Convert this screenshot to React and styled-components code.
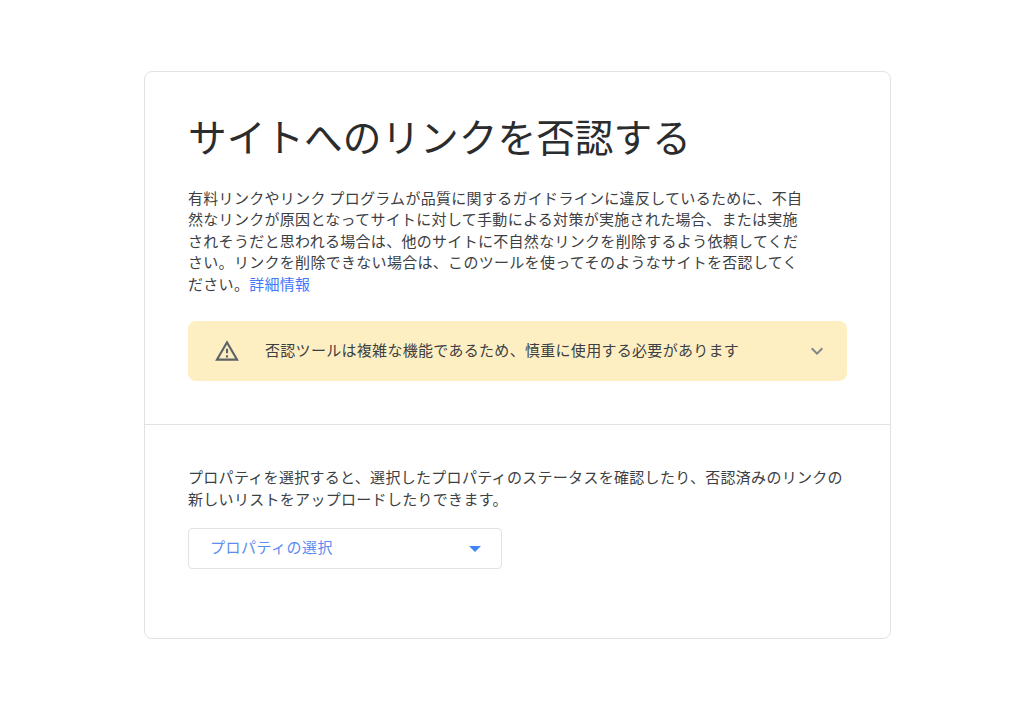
import React from 'react';
import styled, { createGlobalStyle } from 'styled-components';

const GlobalStyle = createGlobalStyle`
  html, body {
    margin: 0;
    padding: 0;
    background: #fff;
    font-family: "Noto Sans CJK JP", "Liberation Sans", sans-serif;
  }
`;

const Page = styled.main`
  display: flex;
  justify-content: center;
  padding: 71px 0 75px 10px;
`;

const Card = styled.div`
  box-sizing: border-box;
  width: 747px;
  height: 568px;
  border: 1px solid #e0e2e5;
  border-radius: 8px;
  background: #fff;
`;

const TopSection = styled.section`
  box-sizing: border-box;
  height: 353px;
  padding: 35px 43px 0;
  border-bottom: 1px solid #e0e2e5;
`;

const Title = styled.h1`
  margin: 0;
  font-size: 38.7px;
  line-height: 56px;
  font-weight: 400;
  color: #2b2c2e;
`;

const Description = styled.p`
  margin: 23.5px 0 0;
  max-width: 616px;
  font-size: 15px;
  line-height: 21.6px;
  letter-spacing: 0.3px;
  color: #3c4043;
`;

const MoreLink = styled.a`
  color: #4277fb;
  text-decoration: none;
`;

const Notice = styled.div`
  display: flex;
  align-items: center;
  height: 60px;
  margin-top: 26.5px;
  padding: 0 18px 0 26px;
  border-radius: 8px;
  background: #feefc3;
`;

const NoticeText = styled.span`
  flex: 1;
  margin-left: 25px;
  margin-bottom: 2px;
  font-size: 15px;
  letter-spacing: 0.3px;
  color: #3c4043;
`;

const BottomSection = styled.section`
  padding: 41px 43px 0;
`;

const Hint = styled.p`
  margin: 0;
  font-size: 15px;
  line-height: 22px;
  letter-spacing: 0.3px;
  color: #3c4043;
`;

const PropertySelect = styled.div`
  box-sizing: border-box;
  display: flex;
  align-items: center;
  justify-content: space-between;
  width: 314px;
  height: 41px;
  margin-top: 18px;
  padding: 0 20px 0 21px;
  border: 1px solid #e0e2e5;
  border-radius: 4px;
  font-size: 15px;
  letter-spacing: 0.5px;
  color: #5b8def;
`;

const SelectLabel = styled.span`
  margin-bottom: 4px;
`;

function WarningIcon() {
  return (
    <svg width="26" height="26" viewBox="0 0 24 24" fill="#5f6368">
      <path d="M12 5.99 19.53 19H4.47L12 5.99M12 2 1 21h22L12 2zm1 14h-2v2h2v-2zm0-6h-2v4h2v-4z" />
    </svg>
  );
}

function ChevronIcon() {
  return (
    <svg width="24" height="24" viewBox="0 0 24 24" fill="#80868b">
      <path d="M7.41 8.59 12 13.17l4.59-4.58L18 10l-6 6-6-6z" />
    </svg>
  );
}

function CaretIcon() {
  return (
    <svg width="12" height="6" viewBox="0 0 12 6" fill="#4285f4">
      <path d="M0 0h12L6 6z" />
    </svg>
  );
}

export default function App() {
  return (
    <>
      <GlobalStyle />
      <Page>
        <Card>
          <TopSection>
            <Title>サイトへのリンクを否認する</Title>
            <Description>
              有料リンクやリンク プログラムが品質に関するガイドラインに違反しているために、不自然なリンクが原因となってサイトに対して手動による対策が実施された場合、または実施されそうだと思われる場合は、他のサイトに不自然なリンクを削除するよう依頼してください。リンクを削除できない場合は、このツールを使ってそのようなサイトを否認してください。
              <MoreLink href="#">詳細情報</MoreLink>
            </Description>
            <Notice>
              <WarningIcon />
              <NoticeText>否認ツールは複雑な機能であるため、慎重に使用する必要があります</NoticeText>
              <ChevronIcon />
            </Notice>
          </TopSection>
          <BottomSection>
            <Hint>
              プロパティを選択すると、選択したプロパティのステータスを確認したり、否認済みのリンクの新しいリストをアップロードしたりできます。
            </Hint>
            <PropertySelect>
              <SelectLabel>プロパティの選択</SelectLabel>
              <CaretIcon />
            </PropertySelect>
          </BottomSection>
        </Card>
      </Page>
    </>
  );
}
